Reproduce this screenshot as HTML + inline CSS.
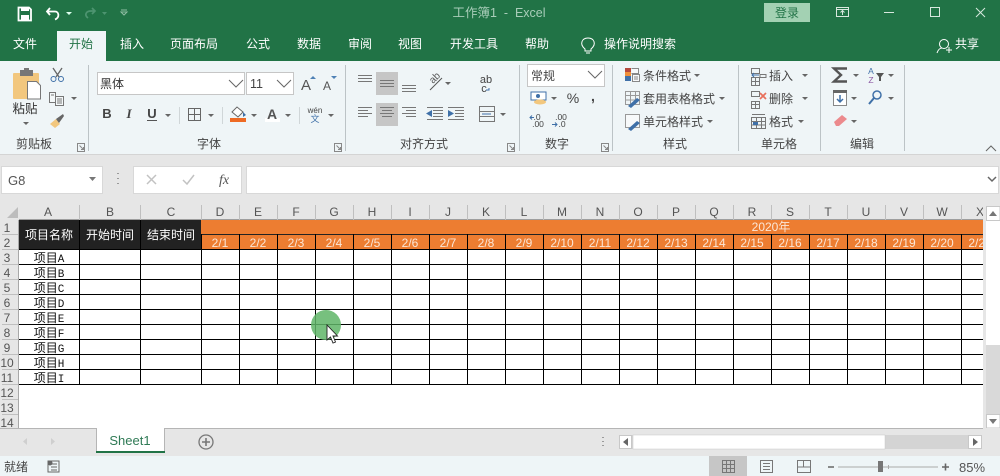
<!DOCTYPE html>
<html><head><meta charset="utf-8"><title>工作簿1 - Excel</title>
<style>
html,body{margin:0;padding:0;background:#e6e6e6;width:1000px;height:476px;overflow:hidden}
svg{display:block}
text{font-family:"Liberation Sans","Noto Sans CJK SC",sans-serif;font-size:12px;fill:#444}
.t{fill:#fff}
.c{text-anchor:middle}
.h{font-family:"Liberation Sans","WenQuanYi Zen Hei",sans-serif;fill:#555}
.d{fill:#fbe6d6;text-anchor:middle}
.k{font-family:"WenQuanYi Zen Hei","Noto Sans CJK SC",sans-serif;fill:#111;text-anchor:middle}
.m{font-family:"Liberation Mono",monospace;font-size:11px}
.l{fill:none;stroke:#666;stroke-width:1}
</style></head><body>
<svg width="1000" height="476" viewBox="0 0 1000 476" xmlns="http://www.w3.org/2000/svg">
<defs>
<polygon id="a" points="0,0 6,0 3,3" fill="#666"/>
<clipPath id="gc"><rect x="0" y="200" width="983" height="60"/></clipPath>
</defs>
<rect width="1000" height="476" fill="#e6e6e6"/>
<!-- title bar -->
<rect width="1000" height="61" fill="#217346"/>
<path d="M18.500 7.500h10.500l2 2v11h-12.500z" fill="none" stroke="#fff" stroke-width="1.800"/><rect x="21" y="7" width="8" height="4" fill="#fff"/><rect x="21" y="15" width="8" height="5" fill="#fff"/>
<path d="M50 15l-3-3.500 3-3.500M47 11.500h8c4 0 5 6 0 8" fill="none" stroke="#fff" stroke-width="1.800"/><polygon points="66,12 72,12 69,15" fill="#dfe"/>
<path d="M88 18c-4-3-2-7 3-7h3M92 8l3 3-3 3" fill="none" stroke="#4d9470" stroke-width="1.700"/><polygon points="102,12 107,12 104.500,15" fill="#4d9470"/>
<path d="M121 10h6M121 12l3 3 3-3z" fill="none" stroke="#8fbca3"/>
<text x="499" y="17" class="c" style="fill:#a9cdb9;font-size:12.500px;white-space:pre">工作簿1  -  Excel</text>
<rect x="764" y="3" width="46" height="19" fill="#a3d1b3"/>
<text x="787" y="17" class="c" style="fill:#217346">登录</text>
<path d="M836.500 7.500h12v9h-12zM836.500 9.500h12M842.500 15v-4M840.500 12.500l2-2 2 2" fill="none" stroke="#d8e8de"/>
<path d="M884 12.500h10" stroke="#d8e8de"/>
<rect x="930.500" y="7.500" width="9" height="9" fill="none" stroke="#d8e8de"/>
<path d="M976 8l9 9M985 8l-9 9" stroke="#d8e8de"/>
<rect x="57" y="31" width="49" height="30" fill="#eff5f7"/>
<g class="tabs">
<text x="25" y="48" class="c t">文件</text>
<text x="81" y="48" class="c" style="fill:#217346">开始</text>
<text x="132" y="48" class="c t">插入</text>
<text x="194" y="48" class="c t">页面布局</text>
<text x="258" y="48" class="c t">公式</text>
<text x="309" y="48" class="c t">数据</text>
<text x="360" y="48" class="c t">审阅</text>
<text x="410" y="48" class="c t">视图</text>
<text x="474" y="48" class="c t">开发工具</text>
<text x="537" y="48" class="c t">帮助</text>
<text x="640" y="48" class="c t">操作说明搜索</text>
<text x="967" y="48" class="c t">共享</text>
</g>
<path d="M585 49c-6-5-3-11 3-11s9 6 3 11v2h-6zM586 53h4" fill="none" stroke="#fff"/>
<circle cx="944" cy="44" r="4.500" fill="none" stroke="#fff"/><path d="M937 53c1-3 3-5 5-5M946 50h6M949 47v6" fill="none" stroke="#fff"/>
<!-- ribbon -->
<rect y="61" width="1000" height="93" fill="#eff5f7"/>
<rect y="154" width="1000" height="1" fill="#d4d4d4"/>
<g fill="#bcc3c6">
<rect x="88" y="65" width="1" height="86"/><rect x="345" y="65" width="1" height="86"/><rect x="519" y="65" width="1" height="86"/><rect x="612" y="65" width="1" height="86"/><rect x="738" y="65" width="1" height="86"/><rect x="820" y="65" width="1" height="86"/><rect x="904" y="65" width="1" height="86"/>
</g>
<!-- clipboard -->
<rect x="13" y="73" width="26" height="26" rx="1" fill="#f2c77e"/>
<rect x="20" y="70" width="13" height="6" fill="#777"/><rect x="24" y="68" width="5" height="4" fill="#777"/>
<path d="M27.500 81.500h9l4 4v13.500h-13z" fill="#fff" stroke="#777"/>
<text x="25" y="113" class="c" style="font-size:12.500px;fill:#333">粘贴</text>
<use href="#a" x="23" y="122"/>
<path d="M53 68l6 9M62 68l-6 9" stroke="#666" stroke-width="1.300"/><circle cx="53.500" cy="79" r="2.500" fill="none" stroke="#3f70a8"/><circle cx="61" cy="79" r="2.500" fill="none" stroke="#3f70a8"/>
<path d="M49.500 92.500h6v10h-6zM55.500 96.500h8v9h-8zM57 99h5M57 101h5M57 103h5M51 95h3" fill="#f4f8f9" stroke="#777"/>
<use href="#a" x="71" y="97"/>
<path d="M50 124l6-5 4 5-5 4z" fill="#f2c77e"/><path d="M56 119l7-5 1 2-5 7z" fill="#666"/>
<text x="34" y="148" class="c">剪贴板</text>
<g fill="none" stroke="#888"><path d="M77.500 143.500h7v8h-7zM79.500 145.500l4 4M83.500 147v2.500h-2.500"/><path d="M334.500 143.500h7v8h-7zM336.500 145.500l4 4M340.500 147v2.500h-2.500"/><path d="M507.500 143.500h7v8h-7zM509.500 145.500l4 4M513.500 147v2.500h-2.500"/><path d="M601.500 143.500h7v8h-7zM603.500 145.500l4 4M607.500 147v2.500h-2.500"/></g>
<!-- font -->
<rect x="97.500" y="72.500" width="147" height="22" fill="#fff" stroke="#c6c6c6"/>
<rect x="246.500" y="72.500" width="47" height="22" fill="#fff" stroke="#c6c6c6"/>
<text x="100" y="88" style="font-family:'WenQuanYi Zen Hei',sans-serif;fill:#333">黑体</text>
<text x="250" y="88" style="font-size:12.500px">11</text>
<path d="M229 80l7 7 7-7M277 80l7 7 7-7" class="l"/>
<text x="306" y="90" class="c" style="font-size:15px;fill:#555">A</text><polygon points="310,79 313,76 316,79" fill="#4f81b5"/>
<text x="327" y="90" class="c" style="font-size:12px;fill:#555">A</text><polygon points="331,76 337,76 334,79" fill="#4f81b5"/>
<text x="107" y="118" class="c" style="font-weight:bold;font-size:13px">B</text>
<text x="129" y="118" class="c" style="font-style:italic;font-family:'Liberation Serif';font-weight:bold;font-size:13px">I</text>
<text x="152" y="118" class="c" style="font-weight:bold;font-size:13px">U</text><rect x="147" y="120" width="10" height="1" fill="#555"/>
<use href="#a" x="165" y="114"/>
<path d="M179.500 107v17M222.500 107v17M299.500 107v17" stroke="#d0d6d8"/>
<path d="M188.500 108.500h12v12h-12zM194.500 108v13M188 114.500h13" class="l"/>
<use href="#a" x="208" y="114"/>
<path d="M232 112l5-5 6 5-5 5z" fill="#fff" stroke="#666"/><polygon points="243,112 246,115 243,117" fill="#3f70a8"/>
<rect x="230" y="118" width="16" height="4" fill="#ee6a24"/>
<use href="#a" x="251" y="114"/>
<rect x="265" y="118" width="15" height="4" fill="#fff"/>
<text x="272" y="119" class="c" style="font-size:14px;font-weight:bold;fill:#555">A</text>
<use href="#a" x="285" y="114"/>
<text x="315" y="113" class="c" style="font-size:8px">wén</text>
<text x="315" y="122" class="c" style="font-size:9px;fill:#3f70a8">文</text>
<use href="#a" x="328" y="114"/>
<text x="209" y="148" class="c">字体</text>
<!-- align -->
<rect x="376" y="72" width="22" height="23" fill="#c6c6c6"/>
<rect x="376" y="103" width="22" height="23" fill="#c6c6c6"/>
<g stroke="#777" fill="none">
<path d="M358 75.500h14M358 78.500h14M358 81.500h14"/>
<path d="M380 80.500h14M380 83.500h14M380 86.500h14"/>
<path d="M402 85.500h14M402 88.500h14M402 91.500h14"/>
<path d="M358 107.500h14M358 110.500h10M358 113.500h14M358 116.500h10"/>
<path d="M380 107.500h14M382 110.500h10M380 113.500h14M382 116.500h10"/>
<path d="M402 107.500h14M406 110.500h10M402 113.500h14M406 116.500h10"/>
<path d="M433 110.500h10M433 113.500h10M433 116.500h10M427 107.500h16M427 119.500h16M455 110.500h9M455 113.500h9M455 116.500h9M448 107.500h16M448 119.500h16"/>
<path d="M430 90l12-12" stroke="#555"/>
<path d="M479.500 106.500h15v15h-15zM479.500 111.500h15M479.500 116.500h15"/>
</g>
<polygon points="426,113.500 432,110 432,117" fill="#3f70a8"/><polygon points="448,110 448,117 454,113.500" fill="#3f70a8"/>
<path d="M482 114h9" stroke="#3f70a8"/>
<text x="433" y="84" style="font-size:10px;fill:#555" transform="rotate(-45 433 84)">ab</text>
<use href="#a" x="445" y="82"/>
<text x="486" y="83" class="c" style="font-size:11px">ab</text><text x="484" y="92" class="c" style="font-size:11px">c</text>
<path d="M489 88v2h-3" stroke="#3f70a8" fill="none"/>
<use href="#a" x="500" y="113"/>
<text x="424" y="148" class="c">对齐方式</text>
<!-- number -->
<rect x="527.500" y="64.500" width="77" height="22" fill="#fff" stroke="#c6c6c6"/>
<text x="531" y="80">常规</text>
<path d="M588 71l7 7 7-7" class="l"/>
<rect x="531" y="92" width="15" height="8" fill="#fff" stroke="#3f70a8"/>
<ellipse cx="540" cy="102" rx="6" ry="2.500" fill="#f2c77e"/><circle cx="538" cy="96" r="2" fill="#3f70a8"/>
<use href="#a" x="551" y="97"/>
<text x="573" y="103" class="c" style="font-size:14px">%</text>
<text x="593" y="101" class="c" style="font-size:14px;font-weight:bold">,</text>
<text x="537" y="120" style="font-size:8.500px" class="c">.0</text><text x="538" y="127" style="font-size:8.500px" class="c">.00</text>
<text x="561" y="120" style="font-size:8.500px" class="c">.00</text><text x="562" y="127" style="font-size:8.500px" class="c">.0</text>
<path d="M534 117.500h-4M532 115.500l-2 2 2 2M552 124.500h5M555 122.500l2 2-2 2" stroke="#3f70a8" fill="none"/>
<text x="557" y="148" class="c">数字</text>
<!-- styles -->
<rect x="625" y="68" width="6" height="4" fill="#b5493c"/><rect x="625" y="72" width="6" height="4" fill="#ef8f3a"/><rect x="625" y="76" width="6" height="5" fill="#3f70a8"/>
<path d="M631.500 68.500h7v5h-7M632.500 74.500h7v7h-7zM634 77h4M634 79h4" fill="#f7f9fa" stroke="#888"/>
<path d="M625.500 91.500h14v13h-14zM625 95.500h15M630.500 91v14M635.500 91v14M625 100h15" fill="none" stroke="#999"/>
<path d="M628 106l9-8 3 2-9 8z" fill="#3f70a8"/>
<path d="M625.500 114.500h14v13h-14z" fill="#f7f9fa" stroke="#999"/>
<path d="M628 129l9-8 3 2-9 8z" fill="#3f70a8"/>
<text x="643" y="80">条件格式</text><use href="#a" x="694" y="74"/>
<text x="643" y="103">套用表格格式</text><use href="#a" x="719" y="97"/>
<text x="643" y="126">单元格样式</text><use href="#a" x="707" y="120"/>
<text x="675" y="148" class="c">样式</text>
<!-- cells -->
<path d="M751.500 68.500h8v5h-8zM751.500 77.500h8v8h-8zM751.500 81.500h8M755.500 78v7M760 74.500h6v3h-6z" fill="none" stroke="#777"/>
<path d="M759 75h-7M754 73l-2 2 2 2" stroke="#3f70a8" fill="none"/>
<path d="M751.500 91.500h8v5h-8zM751.500 101.500h8v7h-8zM751.500 104.500h8M755.500 101v7" fill="none" stroke="#777"/>
<path d="M760 93l6 6M766 93l-6 6" stroke="#e8705c" stroke-width="1.700"/>
<path d="M751.500 117.500h14v11h-14zM751.500 121.500h14M751.500 125h14M756.500 117v12M761.500 117v12M752 114.500h13" fill="none" stroke="#777"/><rect x="753" y="122" width="5" height="3" fill="#3f70a8"/>
<text x="769" y="80">插入</text><use href="#a" x="802" y="74"/>
<text x="769" y="103">删除</text><use href="#a" x="802" y="97"/>
<text x="769" y="126">格式</text><use href="#a" x="798" y="120"/>
<text x="779" y="148" class="c">单元格</text>
<!-- editing -->
<path d="M847 68.500h-13l7 6.500-7 6.500h13" fill="none" stroke="#555" stroke-width="2.400"/>
<use href="#a" x="853" y="74"/>
<text x="871" y="74" class="c" style="font-size:8.500px;fill:#3f70a8">A</text><text x="871" y="83" class="c" style="font-size:8.500px;fill:#8e5ca6">Z</text>
<polygon points="876,73 884,73 881,77 881,81 879,81 879,77" fill="#555"/>
<use href="#a" x="888" y="74"/>
<rect x="833.500" y="90.500" width="13" height="15" fill="#fff" stroke="#888"/><rect x="833" y="90" width="14" height="3" fill="#666"/>
<path d="M840 95v7M837 99l3 3 3-3" stroke="#3f70a8" fill="none" stroke-width="1.500"/>
<use href="#a" x="851" y="97"/>
<circle cx="877" cy="95" r="4" fill="none" stroke="#3f70a8" stroke-width="1.500"/><path d="M874 98l-5 6" stroke="#3f70a8" stroke-width="2"/>
<use href="#a" x="888" y="97"/>
<path d="M834 122l8-7 5 4-8 7h-3z" fill="#ec8a8d"/>
<use href="#a" x="851" y="120"/>
<text x="862" y="148" class="c">编辑</text>
<path d="M986 151l5-5 5 5" class="l"/>
<!-- formula bar -->
<rect x="1.500" y="166.500" width="101" height="27" fill="#fff" stroke="#d8d8d8"/>
<text x="8" y="185" style="font-size:13px;fill:#555">G8</text>
<polygon points="89,177 96,177 92.500,181" fill="#777"/>
<path d="M118 173v1M118 178v1M118 183v1" stroke="#999" stroke-width="2"/>
<rect x="133.500" y="166.500" width="108" height="27" fill="#fff" stroke="#d8d8d8"/>
<path d="M147 175l9 9M156 175l-9 9" stroke="#c2c2c2" stroke-width="1.500"/>
<path d="M183 180l4 4 7-9" stroke="#c2c2c2" stroke-width="1.500" fill="none"/>
<text x="224" y="184" class="c" style="font-family:'Liberation Serif';font-style:italic;font-size:14px;fill:#555">fx</text>
<rect x="246.500" y="166.500" width="752" height="27" fill="#fff" stroke="#d8d8d8"/>
<path d="M988 177l4 4 4-4" fill="none" stroke="#666" stroke-width="1.500"/>
<!-- sheet -->
<rect x="19" y="220" width="964" height="208" fill="#fff"/>
<rect x="0" y="201" width="986" height="19" fill="#e6e6e6"/>
<rect x="0" y="220" width="19" height="208" fill="#e6e6e6"/>
<polygon points="18,207 18,218 7,218" fill="#bdbdbd"/>
<rect x="19" y="219" width="964" height="1" fill="#9e9e9e"/>
<path d="M18.500 220V428" stroke="#a8a8a8"/>
<path d="M79.500 205V220M140.500 205V220M201.500 205V220M239.500 205V220M277.500 205V220M315.500 205V220M353.500 205V220M391.500 205V220M429.500 205V220M467.500 205V220M505.500 205V220M543.500 205V220M581.500 205V220M619.500 205V220M657.500 205V220M695.500 205V220M733.500 205V220M771.500 205V220M809.500 205V220M847.500 205V220M885.500 205V220M923.500 205V220M961.500 205V220" stroke="#bfbfbf"/>
<path d="M2 234.500h16M2 249.500h16M2 264.500h16M2 279.500h16M2 294.500h16M2 309.500h16M2 324.500h16M2 339.500h16M2 354.500h16M2 369.500h16M2 384.500h16M2 399.500h16M2 414.500h16" stroke="#bfbfbf"/>
<g class="c">
<text x="48" y="216" class="h c">A</text><text x="110" y="216" class="h c">B</text><text x="171" y="216" class="h c">C</text>
<text x="220" y="216" class="h c">D</text><text x="258" y="216" class="h c">E</text><text x="296" y="216" class="h c">F</text><text x="334" y="216" class="h c">G</text><text x="372" y="216" class="h c">H</text><text x="410" y="216" class="h c">I</text><text x="448" y="216" class="h c">J</text><text x="486" y="216" class="h c">K</text><text x="524" y="216" class="h c">L</text><text x="562" y="216" class="h c">M</text><text x="600" y="216" class="h c">N</text><text x="638" y="216" class="h c">O</text><text x="676" y="216" class="h c">P</text><text x="714" y="216" class="h c">Q</text><text x="752" y="216" class="h c">R</text><text x="790" y="216" class="h c">S</text><text x="828" y="216" class="h c">T</text><text x="866" y="216" class="h c">U</text><text x="904" y="216" class="h c">V</text><text x="942" y="216" class="h c">W</text><text x="980" y="216" class="h c">X</text>
</g>
<g>
<text x="7" y="232" class="h c">1</text><text x="7" y="247" class="h c">2</text><text x="7" y="262" class="h c">3</text><text x="7" y="277" class="h c">4</text><text x="7" y="292" class="h c">5</text><text x="7" y="307" class="h c">6</text><text x="7" y="322" class="h c">7</text><text x="7" y="337" class="h c">8</text><text x="7" y="352" class="h c">9</text><text x="7" y="367" class="h c">10</text><text x="7" y="382" class="h c">11</text><text x="7" y="397" class="h c">12</text><text x="7" y="412" class="h c">13</text><text x="7" y="427" class="h c">14</text>
</g>
<rect x="19" y="220" width="182" height="29" fill="#222"/>
<rect x="201" y="220" width="782" height="29" fill="#ed7d31"/>
<path d="M79.500 220V249M140.500 220V249" stroke="#000"/>
<path d="M201 234.500H983" stroke="#222"/>
<path d="M19 249.500H983M19 264.500H983M19 279.500H983M19 294.500H983M19 309.500H983M19 324.500H983M19 339.500H983M19 354.500H983M19 369.500H983M19 384.500H983" stroke="#000"/>
<path d="M79.500 249V384M140.500 249V384M201.500 234V384M239.500 234V384M277.500 234V384M315.500 234V384M353.500 234V384M391.500 234V384M429.500 234V384M467.500 234V384M505.500 234V384M543.500 234V384M581.500 234V384M619.500 234V384M657.500 234V384M695.500 234V384M733.500 234V384M771.500 234V384M809.500 234V384M847.500 234V384M885.500 234V384M923.500 234V384M961.500 234V384" stroke="#000"/>
<text x="49" y="239" class="c" style="fill:#fff;font-family:'WenQuanYi Zen Hei',sans-serif">项目名称</text>
<text x="110" y="239" class="c" style="fill:#fff;font-family:'WenQuanYi Zen Hei',sans-serif">开始时间</text>
<text x="171" y="239" class="c" style="fill:#fff;font-family:'WenQuanYi Zen Hei',sans-serif">结束时间</text>
<text x="771" y="231" class="c" style="fill:#fbe6d6">2020年</text>
<g clip-path="url(#gc)">
<text x="220" y="247" class="d">2/1</text><text x="258" y="247" class="d">2/2</text><text x="296" y="247" class="d">2/3</text><text x="334" y="247" class="d">2/4</text><text x="372" y="247" class="d">2/5</text><text x="410" y="247" class="d">2/6</text><text x="448" y="247" class="d">2/7</text><text x="486" y="247" class="d">2/8</text><text x="524" y="247" class="d">2/9</text><text x="562" y="247" class="d">2/10</text><text x="600" y="247" class="d">2/11</text><text x="638" y="247" class="d">2/12</text><text x="676" y="247" class="d">2/13</text><text x="714" y="247" class="d">2/14</text><text x="752" y="247" class="d">2/15</text><text x="790" y="247" class="d">2/16</text><text x="828" y="247" class="d">2/17</text><text x="866" y="247" class="d">2/18</text><text x="904" y="247" class="d">2/19</text><text x="942" y="247" class="d">2/20</text><text x="980" y="247" class="d">2/21</text>
</g>
<text x="49" y="262" class="k">项目<tspan class="m">A</tspan></text>
<text x="49" y="277" class="k">项目<tspan class="m">B</tspan></text>
<text x="49" y="292" class="k">项目<tspan class="m">C</tspan></text>
<text x="49" y="307" class="k">项目<tspan class="m">D</tspan></text>
<text x="49" y="322" class="k">项目<tspan class="m">E</tspan></text>
<text x="49" y="337" class="k">项目<tspan class="m">F</tspan></text>
<text x="49" y="352" class="k">项目<tspan class="m">G</tspan></text>
<text x="49" y="367" class="k">项目<tspan class="m">H</tspan></text>
<text x="49" y="382" class="k">项目<tspan class="m">I</tspan></text>
<!-- cursor highlight -->
<circle cx="326" cy="325" r="15" fill="#5fb567" fill-opacity=".85"/>
<path d="M327 325v15l3.500-3 2.500 6 2.500-1-2.500-6h4.500z" fill="#fff" stroke="#222" stroke-width=".9"/>
<!-- vertical scrollbar -->
<rect x="983" y="201" width="17" height="227" fill="#e6e6e6"/>
<rect x="986" y="206" width="14" height="222" fill="#d9d9d9"/>
<rect x="986" y="221" width="14" height="124" fill="#fff"/>
<rect x="986.500" y="206.500" width="13.500" height="14" fill="#fff" stroke="#c8c8c8"/>
<rect x="986.500" y="414.500" width="13.500" height="13.500" fill="#fff" stroke="#c8c8c8"/>
<polygon points="989,216 997,216 993,211" fill="#777"/>
<polygon points="989,419 997,419 993,424" fill="#777"/>
<!-- tab bar -->
<rect y="428" width="1000" height="28" fill="#e6e6e6"/>
<rect y="428" width="983" height="1" fill="#b5b5b5"/>
<polygon points="27,438 27,445 23,441.500" fill="#cfcfcf"/><polygon points="51,438 51,445 55,441.500" fill="#cfcfcf"/>
<path d="M96.500 428v24M164.500 428v24" stroke="#b5b5b5"/>
<rect x="97" y="428" width="67" height="24" fill="#fff"/>
<rect x="96" y="451" width="69" height="2" fill="#217346"/>
<text x="130" y="445" class="c" style="font-size:13px;fill:#2f7a55">Sheet1</text>
<circle cx="206" cy="442" r="7" fill="none" stroke="#777" stroke-width="1.300"/>
<path d="M202 442h8M206 438v8" stroke="#777" stroke-width="1.600"/>
<path d="M603 437v1M603 441v1M603 445v1" stroke="#888" stroke-width="1.600"/>
<rect x="619" y="435" width="363" height="14" fill="#d4d4d4"/>
<rect x="619.500" y="435.500" width="12" height="13" fill="#fff" stroke="#c8c8c8"/>
<rect x="633" y="435" width="252" height="14" fill="#fff" stroke="#c8c8c8" stroke-width=".5"/>
<rect x="968.500" y="435.500" width="13" height="13" fill="#fff" stroke="#c8c8c8"/>
<polygon points="628,438 628,446 623,442" fill="#666"/>
<polygon points="973,438 973,446 978,442" fill="#666"/>
<!-- status bar -->
<rect y="456" width="1000" height="20" fill="#eef5f7"/>
<text x="4" y="471" style="font-size:12px">就绪</text>
<circle cx="50" cy="463" r="2.500" fill="#666"/><path d="M48 464h11v11h-11zM51 467h6M51 470h6M51 473h6" fill="none" stroke="#666" transform="translate(0 -3)"/>
<rect x="709" y="456" width="38" height="20" fill="#c6c6c6"/>
<path d="M722.500 460.500h12v12h-12zM726.500 460v13M730.500 460v13M722 464.500h13M722 468.500h13" fill="none" stroke="#777"/>
<path d="M760.500 460.500h12v12h-12zM763 463.500h7M763 466.500h7M763 469.500h7" fill="none" stroke="#777"/>
<path d="M797.500 460.500h13v12h-13zM803.500 460v7h-6M804 467h6" fill="none" stroke="#777"/>
<path d="M828 467h6M942 467h7M945.500 463.500v7" stroke="#666" stroke-width="1.600"/>
<path d="M838 467h100M888.500 465v4" stroke="#aaa"/>
<rect x="878" y="461" width="5" height="11" fill="#777"/>
<text x="972" y="472" class="c" style="font-size:13px;fill:#555">85%</text>
</svg>
</body></html>
